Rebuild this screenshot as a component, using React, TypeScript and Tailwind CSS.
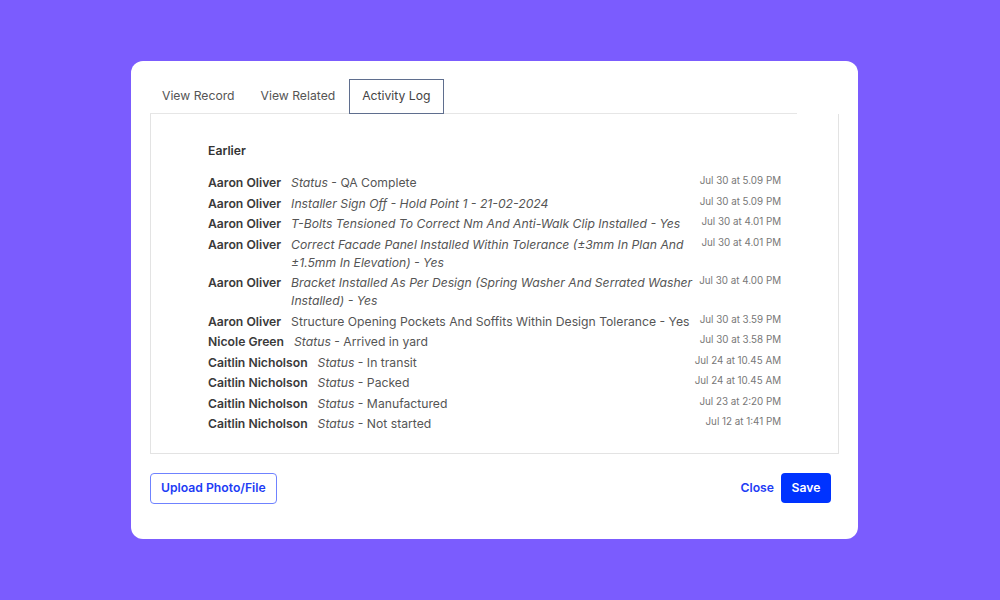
import React from "react";

type Row = { name: string; label?: string; text: string; italic?: boolean; time: string };

const rows: Row[] = [
  { name: "Aaron Oliver", label: "Status", text: " - QA Complete", time: "Jul 30 at 5.09 PM" },
  { name: "Aaron Oliver", text: "Installer Sign Off - Hold Point 1 - 21-02-2024", italic: true, time: "Jul 30 at 5.09 PM" },
  { name: "Aaron Oliver", text: "T-Bolts Tensioned To Correct Nm And Anti-Walk Clip Installed - Yes", italic: true, time: "Jul 30 at 4.01 PM" },
  { name: "Aaron Oliver", text: "Correct Facade Panel Installed Within Tolerance (±3mm In Plan And ±1.5mm In Elevation) - Yes", italic: true, time: "Jul 30 at 4.01 PM" },
  { name: "Aaron Oliver", text: "Bracket Installed As Per Design (Spring Washer And Serrated Washer Installed) - Yes", italic: true, time: "Jul 30 at 4.00 PM" },
  { name: "Aaron Oliver", text: "Structure Opening Pockets And Soffits Within Design Tolerance - Yes", time: "Jul 30 at 3.59 PM" },
  { name: "Nicole Green", label: "Status", text: " - Arrived in yard", time: "Jul 30 at 3.58 PM" },
  { name: "Caitlin Nicholson", label: "Status", text: " - In transit", time: "Jul 24 at 10.45 AM" },
  { name: "Caitlin Nicholson", label: "Status", text: " - Packed", time: "Jul 24 at 10.45 AM" },
  { name: "Caitlin Nicholson", label: "Status", text: " - Manufactured", time: "Jul 23 at 2:20 PM" },
  { name: "Caitlin Nicholson", label: "Status", text: " - Not started", time: "Jul 12 at 1:41 PM" },
];

export default function App() {
  return (
    <div
      className="w-[1000px] h-[600px] bg-[#7B5CFE] flex items-start justify-start pl-[131px] pt-[61px]"
      style={{ fontFamily: "Inter, 'Noto Sans', sans-serif" }}
    >
      <div className="w-[727px] h-[478px] bg-white rounded-[12px] pt-[18px] px-[19px] flex flex-col">
        {/* Tabs */}
        <div className="flex gap-[2px] border-b border-[#e6e6e6] mr-[42px] text-[12.2px] text-[#555]">
          <div className="h-[34px] px-[12px] flex items-center">View Record</div>
          <div className="h-[34px] px-[12px] flex items-center">View Related</div>
          <div className="h-[35px] -mb-px px-[12px] flex items-center border border-[#5f6e8e] text-[#444] bg-white">
            Activity Log
          </div>
        </div>
        {/* Panel */}
        <div className="h-[340px] border-l border-r border-b border-[#e3e3e3] px-[57px] pt-[27px]">
          <div className="text-[12.2px] leading-[20px] font-semibold text-[#333]">Earlier</div>
          <div className="mt-[13px] flex flex-col gap-[2.5px]">
            {rows.map((r, i) => (
              <div key={i} className="flex items-start text-[12.2px] leading-[18px]">
                <div className="font-semibold text-[#3a3a3a] shrink-0 mr-[10px]">{r.name}</div>
                <div className="flex-1 text-[#555]">
                  {r.label ? (
                    <>
                      <span className="italic">{r.label}</span>
                      <span>{r.text}</span>
                    </>
                  ) : (
                    <span className={r.italic ? "italic" : ""}>{r.text}</span>
                  )}
                </div>
                <div className="shrink-0 ml-[5px] text-[9.8px] leading-[14px] text-[#777] text-right">
                  {r.time}
                </div>
              </div>
            ))}
          </div>
        </div>
        {/* Footer */}
        <div className="flex items-start justify-between mt-[19px] pr-[8px]">
          <button className="h-[31px] px-[10px] border border-[#6f82ff] rounded-[4px] text-[12.2px] font-semibold text-[#1d3cf5] bg-white">
            Upload Photo/File
          </button>
          <div className="flex items-center gap-[7px]">
            <button className="text-[12.2px] font-semibold text-[#1d3cf5]">Close</button>
            <button className="h-[30px] w-[50px] rounded-[4px] bg-[#0033ff] text-white text-[12.2px] font-semibold">
              Save
            </button>
          </div>
        </div>
      </div>
    </div>
  );
}
